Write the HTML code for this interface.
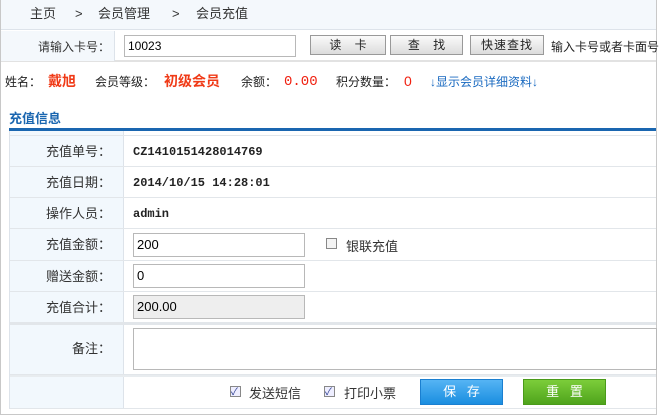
<!DOCTYPE html>
<html><head><meta charset="utf-8"><style>
*{margin:0;padding:0;box-sizing:border-box}
body{width:659px;height:415px;overflow:hidden;background:#fff;font-family:"Liberation Sans","Noto Sans CJK SC",sans-serif;font-size:12px;color:#333;position:relative}
.a{position:absolute}
.frame{left:0;top:0;width:657px;height:415px;border:1px solid #c8c8c8;border-top:none}
.bc{left:1px;top:0;width:655px;height:30px;background:#f4f8fc;border-bottom:1px solid #dde3ea;font-size:13px;color:#333}
.bc span{position:absolute;top:5px;line-height:18px}
.sr{left:1px;top:31px;width:655px;height:31px;border-bottom:2px solid #e2e2e2}
.btn{position:absolute;top:35px;height:20px;border:1px solid #999;background:linear-gradient(#fafafa,#dcdcdc);font-size:12px;text-align:center;line-height:18px;color:#222}
.inp{position:absolute;border:1px solid #b8b8b8;background:#fff;font-size:13px;color:#000;padding-left:3px}
.row{position:absolute;left:10px;width:646px;border-bottom:1px solid #e2e6ea}
.lab{position:absolute;left:10px;width:114px;background:#f2f8fd;border-right:1px solid #dde3ea;text-align:right;padding-right:12px;font-size:13px}
.val{position:absolute;left:133px;font-family:"Liberation Mono","Noto Sans CJK SC",monospace;font-weight:bold;font-size:12px;color:#222;line-height:14px}
.cb{position:absolute;width:11px;height:11px;border:1px solid #888;background:#f4f4f4}
</style></head><body>
<div class="a frame"></div>
<div class="a bc"><span style="left:29px">主页</span><span style="left:74px;font-family:'Liberation Sans',sans-serif">&gt;</span><span style="left:97px">会员管理</span><span style="left:171px">&gt;</span><span style="left:195px">会员充值</span></div>
<div class="a sr"></div>
<div class="a" style="left:1px;top:31px;width:114px;height:30px;background:#f4f8fc;border-right:1px solid #dde3ea"></div>
<div class="a" style="left:38px;top:38px;font-size:12px">请输入卡号：</div>
<div class="inp" style="left:124px;top:35px;width:172px;height:22px;line-height:20px;font-size:12px">10023</div>
<div class="btn" style="left:310px;width:76px">读&nbsp;&nbsp;&nbsp;&nbsp;卡</div>
<div class="btn" style="left:390px;width:73px">查&nbsp;&nbsp;&nbsp;&nbsp;找</div>
<div class="btn" style="left:470px;width:74px;letter-spacing:1px">快速查找</div>
<div class="a" style="left:551px;top:38px;white-space:nowrap;color:#222">输入卡号或者卡面号</div>
<div class="a" style="left:5px;top:73px;white-space:nowrap;font-size:12px;color:#222">姓名：</div>
<div class="a" style="left:48px;top:71px;font-size:14px;font-weight:bold;color:#f03a17">戴旭</div>
<div class="a" style="left:95px;top:73px;color:#222">会员等级：</div>
<div class="a" style="left:164px;top:71px;font-size:14px;font-weight:bold;color:#f03a17">初级会员</div>
<div class="a" style="left:241px;top:73px;color:#222">余额：</div>
<div class="a" style="left:284px;top:74px;font-size:14px;font-family:'Liberation Mono',monospace;color:#f02010">0.00</div>
<div class="a" style="left:336px;top:73px;color:#222">积分数量：</div>
<div class="a" style="left:404px;top:73px;font-size:14px;color:#f02010">0</div>
<div class="a" style="left:430px;top:73px;color:#1a6ac0">↓显示会员详细资料↓</div>
<div class="a" style="left:9px;top:108px;font-size:13px;font-weight:bold;color:#1a66b0">充值信息</div>
<div class="a" style="left:9px;top:128px;width:647px;height:3px;background:#1a66b0"></div>
<div class="a" style="left:9px;top:131px;width:1px;height:278px;background:#dde3ea"></div>
<div class="lab" style="top:131px;height:5px"></div><div class="row" style="top:131px;height:5px"></div>

<div class="lab" style="top:136px;height:31px;line-height:31px">充值单号：</div><div class="row" style="top:136px;height:31px"></div>
<div class="val" style="top:145px">CZ1410151428014769</div>
<div class="lab" style="top:167px;height:31px;line-height:31px">充值日期：</div><div class="row" style="top:167px;height:31px"></div>
<div class="val" style="top:176px">2014/10/15 14:28:01</div>
<div class="lab" style="top:198px;height:31px;line-height:31px">操作人员：</div><div class="row" style="top:198px;height:31px"></div>
<div class="val" style="top:207px">admin</div>
<div class="lab" style="top:229px;height:32px;line-height:32px">充值金额：</div><div class="row" style="top:229px;height:32px"></div>
<div class="inp" style="left:133px;top:233px;width:172px;height:24px;line-height:22px">200</div>
<div class="cb" style="left:326px;top:238px"></div>
<div class="a" style="left:346px;top:236px;font-size:13px">银联充值</div>
<div class="lab" style="top:261px;height:31px;line-height:31px">赠送金额：</div><div class="row" style="top:261px;height:31px"></div>
<div class="inp" style="left:133px;top:264px;width:172px;height:24px;line-height:22px">0</div>
<div class="lab" style="top:292px;height:31px;line-height:31px">充值合计：</div><div class="row" style="top:292px;height:31px"></div>
<div class="inp" style="left:133px;top:295px;width:172px;height:24px;line-height:22px;background:#eeeeee">200.00</div>
<div class="lab" style="top:323px;height:52px;line-height:52px">备注：</div><div class="row" style="top:323px;height:52px;border-top:2px solid #e2e6ea"></div>
<div class="inp" style="left:133px;top:328px;width:524px;height:42px"></div>
<div class="lab" style="top:375px;height:33px"></div><div class="row" style="top:375px;height:34px;border-top:2px solid #e8ecef"></div>
<div class="cb" style="left:230px;top:386px;background:#eef"></div><div class="a" style="left:231px;top:383px;font-size:10px;color:#2a3b8f">✓</div>
<div class="a" style="left:249px;top:383px;font-size:13px">发送短信</div>
<div class="cb" style="left:324px;top:386px;background:#eef"></div><div class="a" style="left:325px;top:383px;font-size:10px;color:#2a3b8f">✓</div>
<div class="a" style="left:344px;top:383px;font-size:13px">打印小票</div>
<div class="a" style="left:420px;top:379px;width:83px;height:26px;background:linear-gradient(#55b4f4,#1a8ee0);border:1px solid #1a7fd0;color:#fff;font-size:13px;text-align:center;line-height:24px">保&nbsp;&nbsp;&nbsp;存</div>
<div class="a" style="left:523px;top:379px;width:83px;height:26px;background:linear-gradient(#7ccd3a,#4fa41c);border:1px solid #4a9a1a;color:#fff;font-size:13px;text-align:center;line-height:24px">重&nbsp;&nbsp;&nbsp;置</div>
</body></html>
